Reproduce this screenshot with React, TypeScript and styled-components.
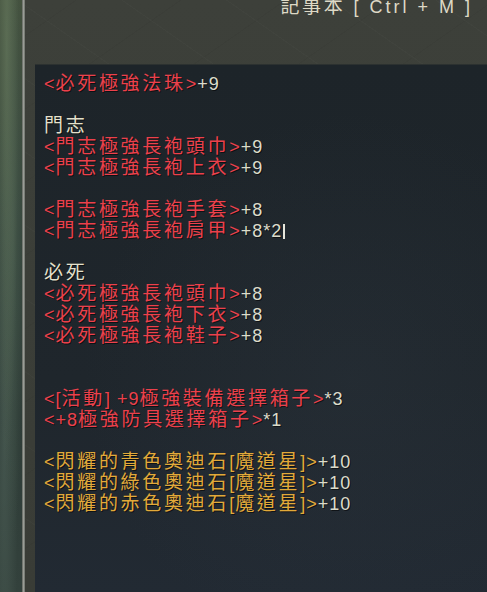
import React from "react";
import styled, { createGlobalStyle } from "styled-components";

const GlobalStyle = createGlobalStyle`
  html, body {
    margin: 0;
    padding: 0;
    width: 487px;
    height: 592px;
    overflow: hidden;
    background: #2f3a33;
  }
  #root { height: 100%; }
`;

type Tone = "red" | "white" | "beige" | "gold";

const toneColor: Record<Tone, string> = {
  red: "#ec414c",
  white: "#dcdccb",
  beige: "#e4e1cc",
  gold: "#e2aa3a",
};

const Page = styled.div`
  display: flex;
  width: 487px;
  height: 592px;
  font-family: "Liberation Sans", "Noto Sans CJK TC", sans-serif;
`;

const Backdrop = styled.div`
  width: 22px;
  flex: none;
  background:
    radial-gradient(ellipse at 30% 8%, rgba(110, 130, 100, 0.55), transparent 55%),
    radial-gradient(ellipse at 60% 40%, rgba(80, 100, 85, 0.5), transparent 60%),
    radial-gradient(ellipse at 20% 75%, rgba(90, 110, 100, 0.45), transparent 55%),
    linear-gradient(180deg, #44523f 0%, #34443b 40%, #2e3c37 70%, #33413c 100%);
`;

const FrameEdge = styled.div`
  width: 3px;
  flex: none;
  background: linear-gradient(90deg, #5e625c, #9a9d96, #6a6e68);
`;

const Frame = styled.div`
  flex: 1;
  min-width: 0;
  display: flex;
  flex-direction: column;
  padding-left: 10px;
  background:
    repeating-linear-gradient(35deg, rgba(255, 255, 255, 0.015) 0 1px, transparent 1px 60px),
    repeating-linear-gradient(-35deg, rgba(0, 0, 0, 0.04) 0 1px, transparent 1px 60px),
    linear-gradient(180deg, #3d403a, #393c36);
`;

const Header = styled.header`
  height: 64px;
  flex: none;
  display: flex;
  justify-content: flex-end;
  align-items: flex-start;
  padding-right: 14px;
  overflow: hidden;
`;

const Title = styled.div`
  margin-top: -4px;
  line-height: 21px;
  font-size: 18px;
  color: #ddd9c6;
  white-space: nowrap;
`;

const NotePanel = styled.div`
  flex: 1;
  padding: 8px 0 0 9px;
  border-top: 1px solid #2c3130;
  background:
    radial-gradient(ellipse at 70% 60%, rgba(50, 60, 70, 0.25), transparent 60%),
    linear-gradient(180deg, #1d2429 0%, #1f262c 60%, #222a33 100%);
  overflow: hidden;
`;

const Line = styled.div<{ $tone: Tone }>`
  height: 21px;
  line-height: 21px;
  font-size: 18px;
  white-space: nowrap;
  color: ${(p) => toneColor[p.$tone]};
  text-shadow: 1px 1px 0 rgba(0, 0, 0, 0.55);
`;

const Segment = styled.span<{ $tone: Tone }>`
  color: ${(p) => toneColor[p.$tone]};
`;

const Run = styled.span<{ $cjk: boolean; $loose?: boolean }>`
  font-size: ${(p) => (p.$cjk ? "19px" : "18px")};
  letter-spacing: ${(p) => (p.$cjk ? "2.7px" : p.$loose ? "3px" : "1px")};
`;

const Caret = styled.span`
  display: inline-block;
  width: 1.5px;
  height: 15px;
  margin-left: 1px;
  vertical-align: -2px;
  background: #e6e6dc;
`;

const cjkRe = /([\u2e80-\u9fff\uf900-\ufaff\uff00-\uffef]+)/;

function Runs({ text, loose }: { text: string; loose?: boolean }) {
  const parts = text.split(cjkRe).filter((s) => s.length > 0);
  return (
    <>
      {parts.map((p, i) => (
        <Run key={i} $cjk={cjkRe.test(p)} $loose={loose}>
          {p}
        </Run>
      ))}
    </>
  );
}

type Seg = { t: string; tone: Tone };
type NoteLine = { segs: Seg[]; caret?: boolean };

const r = (t: string): Seg => ({ t, tone: "red" });
const w = (t: string): Seg => ({ t, tone: "white" });
const b = (t: string): Seg => ({ t, tone: "beige" });
const g = (t: string): Seg => ({ t, tone: "gold" });

const lines: NoteLine[] = [
  { segs: [r("<必死極強法珠>"), w("+9")] },
  { segs: [] },
  { segs: [b("門志")] },
  { segs: [r("<門志極強長袍頭巾>"), w("+9")] },
  { segs: [r("<門志極強長袍上衣>"), w("+9")] },
  { segs: [] },
  { segs: [r("<門志極強長袍手套>"), w("+8")] },
  { segs: [r("<門志極強長袍肩甲>"), w("+8*2")], caret: true },
  { segs: [] },
  { segs: [b("必死")] },
  { segs: [r("<必死極強長袍頭巾>"), w("+8")] },
  { segs: [r("<必死極強長袍下衣>"), w("+8")] },
  { segs: [r("<必死極強長袍鞋子>"), w("+8")] },
  { segs: [] },
  { segs: [] },
  { segs: [r("<[活動] +9極強裝備選擇箱子>"), w("*3")] },
  { segs: [r("<+8極強防具選擇箱子>"), w("*1")] },
  { segs: [] },
  { segs: [g("<閃耀的青色奧迪石[魔道星]>"), w("+10")] },
  { segs: [g("<閃耀的綠色奧迪石[魔道星]>"), w("+10")] },
  { segs: [g("<閃耀的赤色奧迪石[魔道星]>"), w("+10")] },
];

export default function App() {
  return (
    <>
      <GlobalStyle />
      <Page>
        <Backdrop />
        <FrameEdge />
        <Frame>
          <Header>
            <Title>
              <Runs text="記事本 [ Ctrl + M ]" loose />
            </Title>
          </Header>
          <NotePanel>
            {lines.map((line, i) => (
              <Line key={i} $tone="white">
                {line.segs.map((s, j) => (
                  <Segment key={j} $tone={s.tone}>
                    <Runs text={s.t} />
                  </Segment>
                ))}
                {line.caret && <Caret />}
              </Line>
            ))}
          </NotePanel>
        </Frame>
      </Page>
    </>
  );
}
